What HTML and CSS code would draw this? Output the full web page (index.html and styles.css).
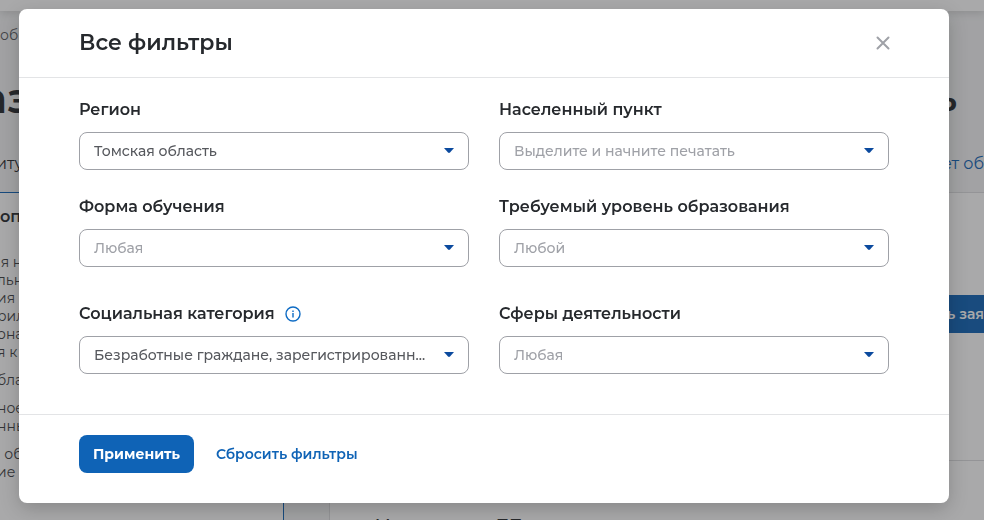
FILE: index.html
```html
<!DOCTYPE html>
<html lang="ru">
<head>
    <meta charset="UTF-8">
    <meta name="viewport" content="width=device-width, initial-scale=1">
    <title>Все фильтры</title>
    <link rel="stylesheet" href="styles.css">
</head>
<body>
    <div class="page">
        <div class="topbar"></div>
        <div class="crumbs">об</div>
        <div class="page-title">
            <span>аз</span>
            <span class="title-end">ь</span>
        </div>
        <div class="page-links">
            <span>иту</span>
            <a href="#" class="page-link">ет об</a>
        </div>
        <div class="columns">
            <aside class="sidebar">
                <h3>оп</h3>
                <p>&nbsp;я н<br>льн<br>ия<br>рил<br>она<br>я к</p>
                <p>бла</p>
                <p>ное<br>нны</p>
                <p>&nbsp;&nbsp;об<br>ие</p>
            </aside>
            <main class="results">
                <div class="result">
                    <button type="button" class="result-btn">ь зая</button>
                </div>
                <div class="result next">
                    <h2>Механизация ПП</h2>
                </div>
            </main>
        </div>
    </div>

    <div class="overlay">
        <div class="modal" role="dialog" aria-labelledby="modalTitle">
            <div class="modal-header">
                <h1 id="modalTitle">Все фильтры</h1>
                <button type="button" class="close" aria-label="Закрыть">
                    <svg width="14" height="14" viewBox="0 0 14 14"><path d="M1.500 1.500l11 11M12.500 1.500l-11 11" fill="none" stroke="#9fa1a7" stroke-width="2" stroke-linecap="round"/></svg>
                </button>
            </div>
            <form id="filters" class="modal-body">
                <div class="field">
                    <label for="region">Регион</label>
                    <div class="select">
                        <select id="region"><option>Томская область</option></select>
                        <svg width="10" height="5" viewBox="0 0 10 5"><path d="M0 0h10L6 4.500Q5 5.300 4 4.500z" fill="#0b4a9e"/></svg>
                    </div>
                </div>
                <div class="field">
                    <label for="city">Населенный пункт</label>
                    <div class="select">
                        <select id="city" class="empty"><option>Выделите и начните печатать</option></select>
                        <svg width="10" height="5" viewBox="0 0 10 5"><path d="M0 0h10L6 4.500Q5 5.300 4 4.500z" fill="#0b4a9e"/></svg>
                    </div>
                </div>
                <div class="field">
                    <label for="form">Форма обучения</label>
                    <div class="select">
                        <select id="form" class="empty"><option>Любая</option></select>
                        <svg width="10" height="5" viewBox="0 0 10 5"><path d="M0 0h10L6 4.500Q5 5.300 4 4.500z" fill="#0b4a9e"/></svg>
                    </div>
                </div>
                <div class="field">
                    <label for="level">Требуемый уровень образования</label>
                    <div class="select">
                        <select id="level" class="empty"><option>Любой</option></select>
                        <svg width="10" height="5" viewBox="0 0 10 5"><path d="M0 0h10L6 4.500Q5 5.300 4 4.500z" fill="#0b4a9e"/></svg>
                    </div>
                </div>
                <div class="field spaced">
                    <label for="category">Социальная категория
                        <svg class="info" width="16" height="16" viewBox="0 0 16 16"><circle cx="8" cy="8" r="7" fill="none" stroke="#0d6bc4" stroke-width="1.400"/><path d="M8 7v4.500M8 4.500v1.400" stroke="#0d6bc4" stroke-width="1.400"/></svg>
                    </label>
                    <div class="select">
                        <select id="category"><option>Безработные граждане, зарегистрированн...</option></select>
                        <svg width="10" height="5" viewBox="0 0 10 5"><path d="M0 0h10L6 4.500Q5 5.300 4 4.500z" fill="#0b4a9e"/></svg>
                    </div>
                </div>
                <div class="field spaced">
                    <label for="sphere">Сферы деятельности</label>
                    <div class="select">
                        <select id="sphere" class="empty"><option>Любая</option></select>
                        <svg width="10" height="5" viewBox="0 0 10 5"><path d="M0 0h10L6 4.500Q5 5.300 4 4.500z" fill="#0b4a9e"/></svg>
                    </div>
                </div>
            </form>
            <div class="modal-footer">
                <button type="submit" form="filters" class="apply">Применить</button>
                <a href="#" class="reset">Сбросить фильтры</a>
            </div>
        </div>
    </div>
</body>
</html>
```

FILE: styles.css
```css
* {
    box-sizing: border-box;
}
body {
    margin: 0;
    font-family: Montserrat, Inter, "Open Sans", sans-serif;
    font-size: 14px;
    color: #26292d;
    background-color: #f3f4f5;
}
h1, h2, h3, p {
    margin: 0;
}

/* page under the overlay */
.page {
    height: 100vh;
    overflow: hidden;
    display: flex;
    flex-direction: column;
}
.topbar {
    flex: none;
    height: 11px;
    background-color: #fff;
    box-shadow: 0 2px 8px rgba(0, 0, 0, 0.15);
}
.crumbs {
    padding-top: 14px;
    line-height: 20px;
    color: #56585d;
}
.page-title {
    display: flex;
    justify-content: space-between;
    padding: 28px 27px 0 0;
    font-size: 42px;
    font-weight: 600;
    line-height: 50px;
    text-indent: -18px;
}
.title-end {
    font-size: 36px;
    text-indent: 0;
}
.page-links {
    flex: none;
    display: flex;
    justify-content: space-between;
    height: 69px;
    padding-top: 31px;
    font-size: 16px;
    line-height: 20px;
    text-indent: -4px;
    white-space: nowrap;
}
.page-link {
    color: #0f63b6;
    text-decoration: none;
    text-indent: 0;
}
.columns {
    flex: 1;
    min-height: 0;
    display: flex;
    gap: 45px;
}
.sidebar {
    width: 284px;
    padding-top: 14px;
    background-color: #fff;
    border-top: 1px solid #0f63b6;
    border-right: 1px solid #0f63b6;
}
.sidebar h3 {
    margin-bottom: 26px;
    font-size: 16px;
    font-weight: 600;
    line-height: 20px;
}
.sidebar p {
    margin: 0 0 10px -3px;
    line-height: 18px;
    color: #3c3e42;
}
.results {
    flex: 1;
    background-color: #fff;
    border-top: 1px solid #dcdddf;
    border-left: 1px solid #dcdddf;
}
.result {
    display: flex;
    justify-content: flex-end;
    height: 268px;
    padding-top: 102px;
    border-bottom: 1px solid #dcdddf;
}
.result.next {
    justify-content: flex-start;
    padding: 55px 0 0 45px;
}
.result h2 {
    font-size: 16px;
    font-weight: 600;
    line-height: 20px;
}
.result-btn {
    height: 38px;
    padding: 0;
    border: none;
    background-color: #0f63b6;
    color: #fff;
    font: 600 14px Montserrat, Inter, sans-serif;
    white-space: nowrap;
}

/* filters dialog */
.overlay {
    position: fixed;
    inset: 0;
    padding: 9px 35px 17px 19px;
    background-color: rgba(39, 40, 42, 0.4);
    overflow: auto;
}
.modal {
    background-color: #fff;
    border-radius: 8px;
    box-shadow: 0 6px 20px rgba(0, 0, 0, 0.2);
}
.modal-header {
    display: flex;
    justify-content: space-between;
    align-items: center;
    padding: 18px 58px 18px 60px;
    border-bottom: 1px solid #e3e4e6;
}
.modal-header h1 {
    font-size: 22px;
    font-weight: 600;
    line-height: 32px;
}
.close {
    display: flex;
    padding: 1px;
    border: none;
    background: none;
    cursor: pointer;
}
.modal-body {
    display: grid;
    grid-template-columns: 1fr 1fr;
    column-gap: 30px;
    row-gap: 25px;
    padding: 20px 60px 40px;
}
.field {
    min-width: 0;
}
.field.spaced {
    padding-top: 10px;
}
.field label {
    display: flex;
    align-items: center;
    gap: 10px;
    margin-bottom: 10px;
    font-size: 16px;
    font-weight: 600;
    line-height: 24px;
}
.select {
    position: relative;
}
.select select {
    display: block;
    width: 100%;
    height: 38px;
    padding: 0 36px 0 14px;
    border: 1px solid #9fa1a7;
    border-radius: 8px;
    background-color: #fff;
    color: #56585d;
    font: 500 14px Montserrat, Inter, "Open Sans", sans-serif;
    text-overflow: ellipsis;
    appearance: none;
}
.select select.empty {
    color: #9fa1a7;
}
.select svg {
    position: absolute;
    top: 16px;
    right: 15px;
    pointer-events: none;
}
.modal-footer {
    display: flex;
    align-items: center;
    gap: 22px;
    padding: 20px 60px 30px;
    border-top: 1px solid #e3e4e6;
}
.apply {
    height: 38px;
    padding: 0 14px;
    border: none;
    border-radius: 8px;
    background-color: #0f63b6;
    color: #fff;
    font: 700 14px Montserrat, Inter, "Open Sans", sans-serif;
    cursor: pointer;
}
.reset {
    color: #0f63b6;
    font-weight: 600;
    text-decoration: none;
}
```
